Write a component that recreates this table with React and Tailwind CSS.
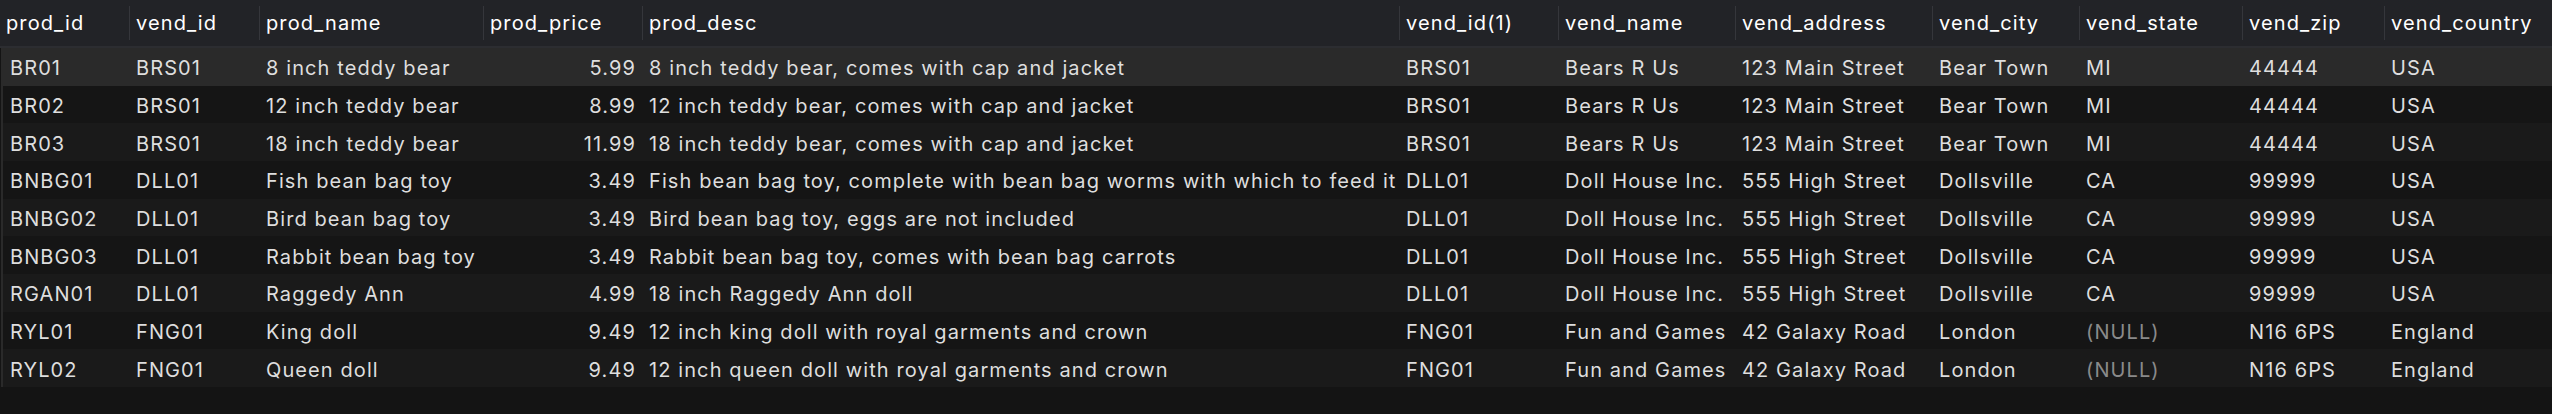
import React from "react";

const cols = [
  { key: "prod_id", w: 129 },
  { key: "vend_id", w: 130 },
  { key: "prod_name", w: 224 },
  { key: "prod_price", w: 159, right: true },
  { key: "prod_desc", w: 757 },
  { key: "vend_id(1)", w: 159 },
  { key: "vend_name", w: 177 },
  { key: "vend_address", w: 197 },
  { key: "vend_city", w: 147 },
  { key: "vend_state", w: 163 },
  { key: "vend_zip", w: 142 },
  { key: "vend_country", w: 168 },
];

const rows = [
  ["BR01", "BRS01", "8 inch teddy bear", "5.99", "8 inch teddy bear, comes with cap and jacket", "BRS01", "Bears R Us", "123 Main Street", "Bear Town", "MI", "44444", "USA"],
  ["BR02", "BRS01", "12 inch teddy bear", "8.99", "12 inch teddy bear, comes with cap and jacket", "BRS01", "Bears R Us", "123 Main Street", "Bear Town", "MI", "44444", "USA"],
  ["BR03", "BRS01", "18 inch teddy bear", "11.99", "18 inch teddy bear, comes with cap and jacket", "BRS01", "Bears R Us", "123 Main Street", "Bear Town", "MI", "44444", "USA"],
  ["BNBG01", "DLL01", "Fish bean bag toy", "3.49", "Fish bean bag toy, complete with bean bag worms with which to feed it", "DLL01", "Doll House Inc.", "555 High Street", "Dollsville", "CA", "99999", "USA"],
  ["BNBG02", "DLL01", "Bird bean bag toy", "3.49", "Bird bean bag toy, eggs are not included", "DLL01", "Doll House Inc.", "555 High Street", "Dollsville", "CA", "99999", "USA"],
  ["BNBG03", "DLL01", "Rabbit bean bag toy", "3.49", "Rabbit bean bag toy, comes with bean bag carrots", "DLL01", "Doll House Inc.", "555 High Street", "Dollsville", "CA", "99999", "USA"],
  ["RGAN01", "DLL01", "Raggedy Ann", "4.99", "18 inch Raggedy Ann doll", "DLL01", "Doll House Inc.", "555 High Street", "Dollsville", "CA", "99999", "USA"],
  ["RYL01", "FNG01", "King doll", "9.49", "12 inch king doll with royal garments and crown", "FNG01", "Fun and Games", "42 Galaxy Road", "London", null, "N16 6PS", "England"],
  ["RYL02", "FNG01", "Queen doll", "9.49", "12 inch queen doll with royal garments and crown", "FNG01", "Fun and Games", "42 Galaxy Road", "London", null, "N16 6PS", "England"],
];

const font = { fontFamily: "Inter, 'Noto Sans', sans-serif" };

export default function App() {
  return (
    <div className="w-[2552px] h-[414px] bg-[#141414] overflow-hidden" style={font}>
      <div className="flex h-[46px] bg-[#222327] items-center">
        {cols.map((c, i) => (
          <div
            key={c.key}
            className={`flex items-center h-[34px] shrink-0 pl-[6px] text-white text-[20px] tracking-[1.1px] ${i > 0 ? "border-l border-[#35363b]" : ""}`}
            style={{ width: c.w }}
          >
            {c.key}
          </div>
        ))}
      </div>
      <div className="h-[2px] bg-[#2c2d31]" />
      <div className="border-l-2 border-[#2a2a2a] ml-[1px]">
        {rows.map((r, ri) => (
          <div
            key={ri}
            className={`flex h-[37.67px] items-center pt-[3px] ${ri === 0 ? "bg-[#2a2a2a]" : ri % 2 === 0 ? "bg-[#1a1a1a]" : "bg-[#151515]"}`}
          >
            {r.map((v, ci) => {
              const c = cols[ci];
              const w = ci === 0 ? c.w - 3 : c.w;
              return (
                <div
                  key={ci}
                  className={`shrink-0 whitespace-nowrap overflow-hidden text-[20px] tracking-[1.1px] ${c.right ? "text-right pr-[6px]" : "pl-[7px]"} ${v === null ? "text-[#8a8a8a]" : "text-[#dedede]"}`}
                  style={{ width: w }}
                >
                  {v === null ? "(NULL)" : v}
                </div>
              );
            })}
          </div>
        ))}
      </div>
    </div>
  );
}
